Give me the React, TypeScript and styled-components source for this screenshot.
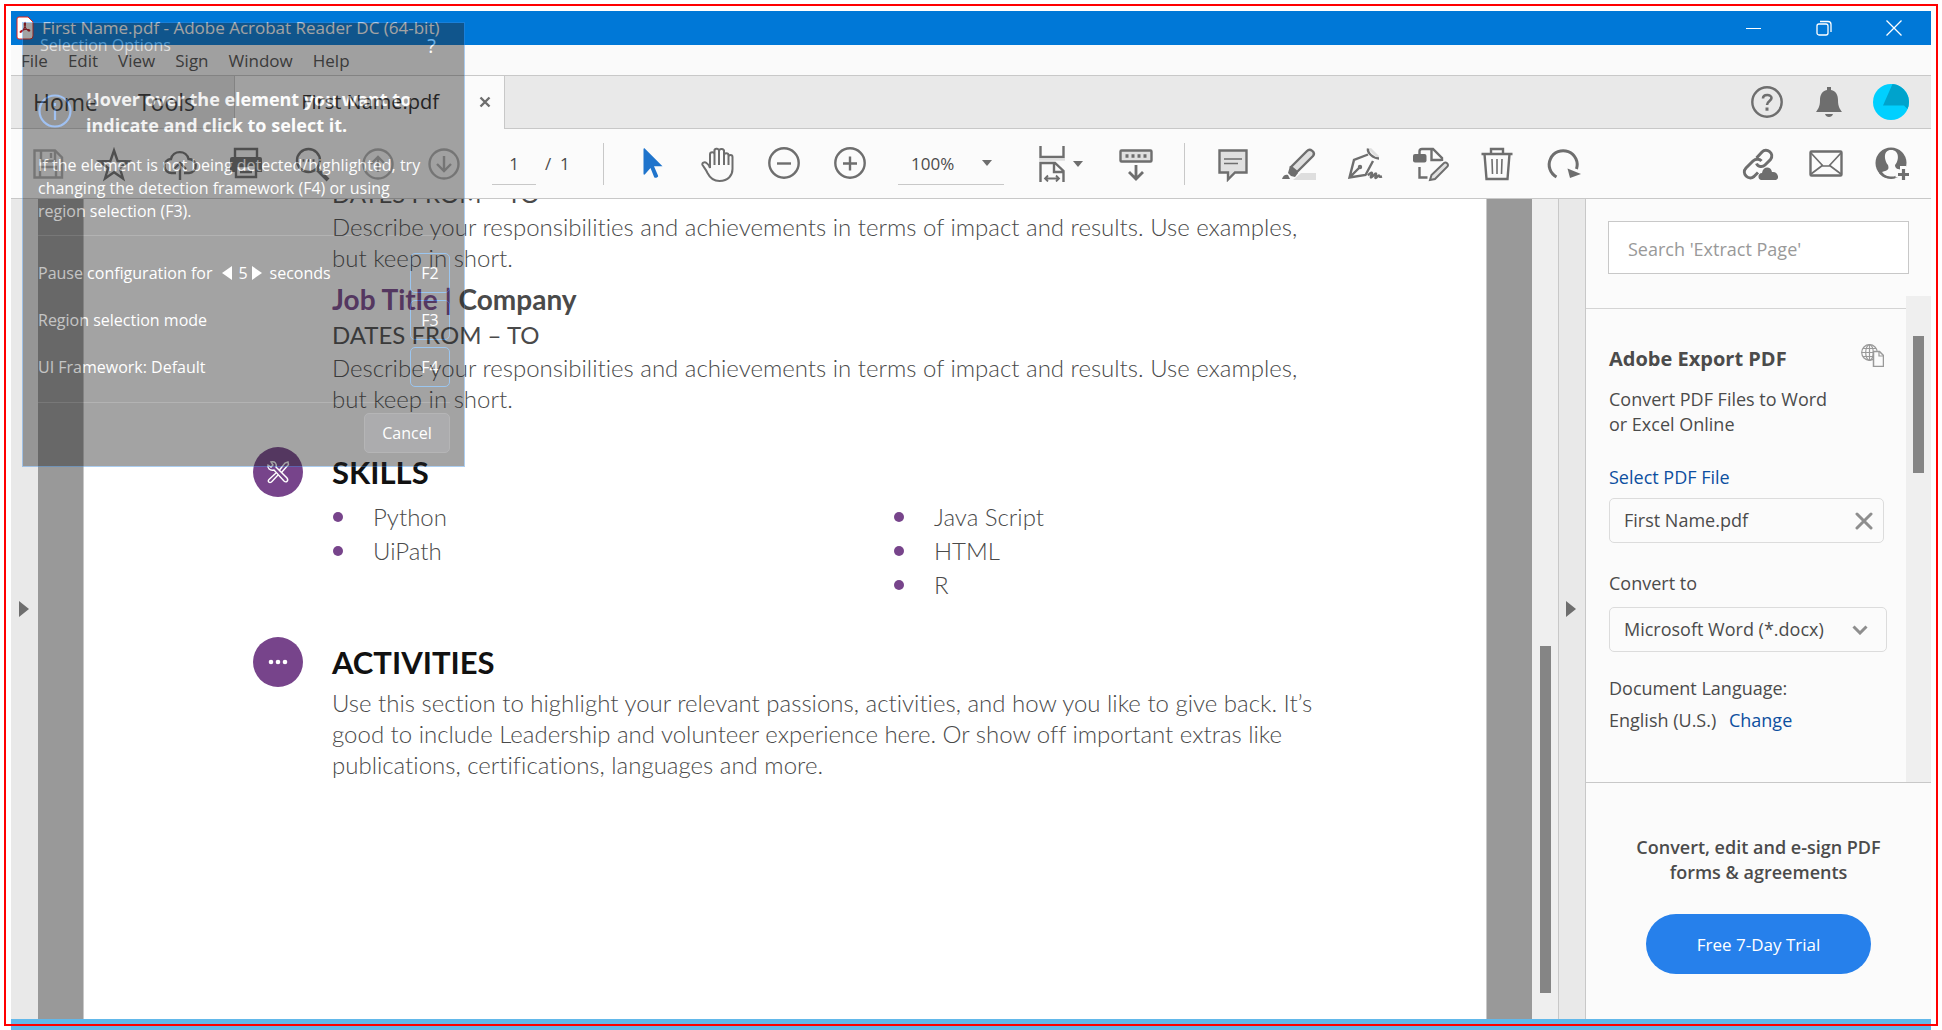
import React from "react";
import styled, { createGlobalStyle } from "styled-components";

const ui = `"Open Sans", "Noto Sans", sans-serif`;
const doc = `Lato, "Open Sans", sans-serif`;
const line = "#c8c8c8";
const ink = "#4b4b4b";
const icon = "#6e6e6e";

const Global = createGlobalStyle`
  * { box-sizing: border-box; }
  body { margin: 0; background: #fff; font-family: ${ui}; color: ${ink}; }
  button, input, select { font: inherit; color: inherit; background: none; border: 0; padding: 0; margin: 0; border-radius: 0; outline: 0; }
  h1, h2, h3, p, ul { margin: 0; padding: 0; }
  a { color: #0d4fa0; text-decoration: none; }
  svg { display: block; flex: none; }
`;

const Screen = styled.div`
  position: relative;
  height: 100vh;
  display: flex;
  flex-direction: column;
  padding: 11px 11px 0;
  overflow: hidden;
`;
const RedFrame = styled.div`
  position: absolute;
  inset: 4px;
  border: 2px solid #f00;
  pointer-events: none;
`;
const Desktop = styled.div`
  flex: none;
  height: 11px;
  background: #62b8ea;
`;
const Window = styled.div`
  flex: 1;
  min-height: 0;
  display: flex;
  flex-direction: column;
`;
const TitleBar = styled.header`
  height: 34px;
  display: flex;
  align-items: center;
  gap: 8px;
  padding: 0 2px 0 5px;
  background: #0078d7;
  color: #fff;
  h1 { flex: 1; font-size: 17px; font-weight: 400; line-height: 34px; }
`;
const WindowControls = styled.div`
  display: flex;
`;
const WindowButton = styled.button`
  width: 70px;
  height: 34px;
  display: grid;
  place-items: center;
`;
const MenuBar = styled.nav`
  height: 31px;
  display: flex;
  gap: 20px;
  padding: 2px 10px 0;
  background: #fafafa;
  border-bottom: 1px solid ${line};
  font-size: 17px;
  line-height: 28px;
`;
const TabStrip = styled.div`
  height: 53px;
  display: flex;
  background: #e9e9e9;
`;
const Tab = styled.button<{ $width: number }>`
  width: ${p => p.$width}px;
  border-bottom: 1px solid ${line};
  font-size: 23px;
  color: #333;
`;
const TabSpace = styled.div`
  width: 21px;
  border-bottom: 1px solid ${line};
`;
const OpenTab = styled.div`
  width: 271px;
  display: flex;
  align-items: center;
  justify-content: flex-end;
  gap: 40px;
  padding: 0 13px 2px 0;
  background: #fbfbfb;
  border: solid ${line};
  border-width: 0 1px;
  font-size: 20px;
  color: #222;
`;
const TabFill = styled.div`
  flex: 1;
  display: flex;
  justify-content: flex-end;
  padding-right: 9px;
  border-bottom: 1px solid ${line};
`;
const Toolbar = styled.div`
  height: 70px;
  display: flex;
  align-items: center;
  padding: 0 6px 0 4px;
  background: #fbfbfb;
  border-bottom: 1px solid ${line};
  font-size: 17px;
`;
const Tool = styled.button<{ $dim?: boolean; $width?: number }>`
  width: ${p => p.$width ?? 66}px;
  height: 52px;
  display: flex;
  align-items: center;
  justify-content: center;
  gap: 8px;
  color: ${p => (p.$dim ? "#b0b0b0" : icon)};
`;
const PageBox = styled.label`
  width: 127px;
  height: 42px;
  display: flex;
  align-items: center;
  gap: 9px;
  padding-left: 15px;
  border-right: 1px solid ${line};
  input { width: 44px; height: 42px; text-align: center; border-bottom: 1px solid ${line}; }
`;
const ToolGroup = styled.div<{ $ruled?: boolean }>`
  height: 42px;
  display: flex;
  align-items: center;
  padding: 0 15px;
  border-right: ${p => (p.$ruled ? `1px solid ${line}` : "0")};
`;
const Spring = styled.div`
  flex: 1;
`;
const ZoomBox = styled.div`
  width: 106px;
  height: 42px;
  display: grid;
  align-items: center;
  border-bottom: 1px solid ${line};
  select { grid-area: 1 / 1; height: 41px; padding-left: 13px; appearance: none; }
  svg { grid-area: 1 / 1; justify-self: end; margin-right: 12px; pointer-events: none; }
`;
const Body = styled.div`
  flex: 1;
  min-height: 0;
  display: flex;
`;
const Rail = styled.button<{ $lined?: boolean }>`
  flex: none;
  width: ${p => (p.$lined ? 28 : 27)}px;
  display: flex;
  align-items: center;
  justify-content: center;
  padding-right: 2px;
  background: #e9e9e9;
  border: solid ${line};
  border-width: 0 ${p => (p.$lined ? "1px" : "0")};
`;
const Canvas = styled.main`
  flex: 1;
  min-width: 0;
  padding: 0 45px;
  background: #999;
  overflow: hidden;
`;
const Sheet = styled.article`
  display: flow-root;
  height: 100%;
  padding: 0 100px 0 169px;
  background: #fff;
  border: solid ${line};
  border-width: 0 1px;
  font-family: ${doc};
  font-variant-ligatures: none;
  color: #4a4a4a;
`;
const Scrolled = styled.div`
  margin-top: -23px;
`;
const Entry = styled.section`
  padding-left: 79px;
  & + & { margin-top: 9px; }
`;
const JobTitle = styled.h3`
  font-size: 28px;
  line-height: 35px;
  font-weight: 700;
  span { color: #77448b; }
`;
const Dates = styled.p`
  font-size: 24px;
  line-height: 35px;
`;
const Prose = styled.p`
  font-size: 24px;
  line-height: 31px;
  font-weight: 300;
`;
const Head = styled.div<{ $gap: number }>`
  display: flex;
  align-items: center;
  gap: 29px;
  height: 50px;
  margin-top: ${p => p.$gap}px;
  h2 { font-size: 31px; font-weight: 700; color: #111; }
`;
const Badge = styled.span`
  width: 50px;
  height: 50px;
  display: grid;
  place-items: center;
  border-radius: 50%;
  background: #77448b;
`;
const Skills = styled.div`
  display: grid;
  grid-template-columns: 561px 1fr;
  padding: 3px 0 0 79px;
`;
const SkillList = styled.ul`
  list-style: none;
  font-size: 24px;
  line-height: 34px;
  font-weight: 300;
  li { display: flex; align-items: center; gap: 30px; }
  li::before { content: ""; width: 10px; height: 10px; margin-left: 1px; border-radius: 50%; background: #77448b; }
`;
const ScrollTrack = styled.div`
  flex: none;
  width: 26px;
  display: flex;
  flex-direction: column;
  align-items: center;
  padding: 447px 0 0;
  background: #efefef;
`;
const Thumb = styled.div<{ $h: number }>`
  width: 11px;
  height: ${p => p.$h}px;
  background: #858585;
`;
const Panel = styled.aside`
  flex: none;
  width: 345px;
  display: flex;
  flex-direction: column;
  background: #fbfbfb;
  font-size: 18px;
  line-height: 25px;
`;
const Search = styled.input`
  height: 53px;
  margin: 22px;
  padding: 3px 19px 0;
  background: #fff;
  border: 1px solid ${line};
  font-size: 18px;
  &::placeholder { color: #999; opacity: 1; }
`;
const PanelScroll = styled.div`
  display: flex;
  height: 486px;
`;
const PanelBody = styled.div`
  flex: 1;
  margin-top: 12px;
  padding: 37px 22px 0 23px;
  border-top: 1px solid #d4d4d4;
  h2 { font-size: 20px; line-height: 26px; }
`;
const PanelTrack = styled.div`
  width: 25px;
  padding: 40px 7px 0;
  background: #efefef;
`;
const PanelTitle = styled.div`
  display: flex;
  justify-content: space-between;
  margin-bottom: 15px;
  svg { margin-top: -2px; }
`;
const Gap = styled.div`
  margin-top: 28px;
`;
const FileBox = styled.div`
  display: flex;
  align-items: center;
  justify-content: space-between;
  height: 45px;
  margin-top: 8px;
  padding: 0 10px 0 14px;
  border: 1px solid #dcdcdc;
  border-radius: 5px;
`;
const FormatBox = styled.div`
  display: grid;
  align-items: center;
  height: 45px;
  margin: 11px -3px 20px 0;
  border: 1px solid #dcdcdc;
  border-radius: 5px;
  select { grid-area: 1 / 1; padding-left: 14px; appearance: none; height: 43px; }
  svg { grid-area: 1 / 1; justify-self: end; margin-right: 18px; pointer-events: none; }
`;
const Language = styled.p`
  line-height: 32px;
  a { margin-left: 8px; }
`;
const Promo = styled.footer`
  flex: 1;
  display: flex;
  flex-direction: column;
  align-items: center;
  padding-top: 52px;
  border-top: 1px solid ${line};
  text-align: center;
  p { font-size: 18px; font-weight: 600; }
`;
const Trial = styled.button`
  width: 225px;
  height: 60px;
  margin-top: 29px;
  border-radius: 30px;
  background: #2680eb;
  color: #fff;
  font-size: 17px;
`;
const Dialog = styled.div`
  position: absolute;
  left: 22px;
  top: 22px;
  width: 443px;
  height: 445px;
  padding: 10px 14px 0 15px;
  opacity: 0.42;
  background: #262626;
  border: 1px solid #3c8ce0;
  color: #fff;
  font-size: 16px;
`;
const DialogTop = styled.div`
  display: flex;
  justify-content: space-between;
  align-items: center;
  height: 24px;
  padding: 0 14px 0 2px;
  color: #bbb;
  button { font-size: 20px; color: #fff; }
`;
const Lead = styled.div`
  display: flex;
  gap: 14px;
  margin-top: 29px;
  h2 { font-size: 18px; line-height: 26px; font-weight: 700; white-space: nowrap; }
  svg { margin-top: 8px; }
`;
const Hint = styled.p`
  margin-top: 16px;
  padding-bottom: 12px;
  line-height: 23px;
  border-bottom: 1px solid #4c4c4c;
`;
const Options = styled.div`
  display: grid;
  gap: 7px;
  padding: 17px 0 15px;
  border-bottom: 1px solid #4c4c4c;
`;
const Option = styled.div`
  display: flex;
  align-items: center;
  justify-content: space-between;
  height: 40px;
  span { display: flex; align-items: center; gap: 4px; }
`;
const Key = styled.button`
  width: 40px;
  height: 40px;
  border: 1px solid #1478dc;
  border-radius: 5px;
`;
const Cancel = styled.button`
  display: block;
  width: 86px;
  height: 40px;
  margin: 10px 0 0 auto;
  background: #3c3c40;
  border: 1px solid #505054;
  border-radius: 5px;
`;

const Svg = ({ w = 36, h = w, sw = 2.4, children }: { w?: number; h?: number; sw?: number; children: React.ReactNode }) => (
  <svg width={w} height={h} viewBox={`0 0 ${w} ${h}`} fill="none" stroke="currentColor" strokeWidth={sw} aria-hidden="true">
    {children}
  </svg>
);
const Caret = () => (
  <svg width="10" height="6" viewBox="0 0 10 6" aria-hidden="true"><path d="M0 0h10L5 6z" fill={icon} /></svg>
);
const Arrow = () => (
  <svg width="10" height="16" viewBox="0 0 10 16" aria-hidden="true"><path d="M0 0l10 8-10 8z" fill={icon} /></svg>
);

const fileTools: { name: string; dim?: boolean; art: React.ReactNode }[] = [
  { name: "Save", dim: true, art: <><path d="M4.500 4.500H25l7 7v20H4.500z" /><path d="M11 5v10h14V5M21 7v5M10 31V21h16v10" /></> },
  { name: "Star", art: <path d="M18 4.500l3.600 10.500 11 .3-8.800 6.700 3.200 10.500L18 26.300l-9 6.200 3.200-10.500L3.400 15.300l11-.3z" /> },
  { name: "Upload", art: <><path d="M14 27H10a7 7 0 0 1-1-14 9 9 0 0 1 17.500 0A7 7 0 0 1 27 27h-5" /><path d="M18 34V18M12 23l6-6 6 6" /></> },
  { name: "Print", art: <><path d="M7 12V3h22v9" /><path d="M4 11h28a2 2 0 0 1 2 2v13h-5v-5H7v5H2V13a2 2 0 0 1 2-2z" fill="currentColor" stroke="none" /><path d="M8 20h20v11H8zM12 26h12" /></> },
  { name: "Find", art: <><circle cx="14.500" cy="14.500" r="11.500" /><path d="M23 23l11 11" strokeWidth="4" /><path d="M8.500 14.500h2M13.500 14.500h2M18.500 14.500h2" /></> },
  { name: "Previous page", dim: true, art: <><circle cx="18" cy="18" r="14.500" /><path d="M18 26V11M11 18l7-7 7 7" /></> },
  { name: "Next page", dim: true, art: <><circle cx="18" cy="18" r="14.500" /><path d="M18 10v15M11 18l7 7 7-7" /></> },
];
const viewTools = [
  { name: "Select", art: <path d="M9.500 3.300c0-1 .8-1.300 1.500-.6L28.500 20.200H20l4 9.300c.5 1-.2 1.500-1 1.900-1.200.6-2.400.6-2.900-.5L16.500 22l-5.500 6.300c-.7.600-1.500.4-1.500-.6z" fill="#1f74cc" stroke="none" /> },
  { name: "Pan", art: <path strokeWidth="2" d="M10 22V8.500a2 2 0 0 1 4.500 0V19 5.500a2 2 0 0 1 4.500-1V19 5a2 2 0 0 1 5 1v13V9.500a2 2 0 0 1 4.500 0V19 11a2 2 0 0 1 4 0v12c0 6-4 12-13 12-7 0-10-4-12-8-1.500-3.500-3-5-5-8-1-2 2-3.500 4-2 2 1.300 3 3.300 3.500 5z" /> },
  { name: "Zoom out", art: <><circle cx="18" cy="17" r="14.700" /><path d="M11 17.500h14" /></> },
  { name: "Zoom in", art: <><circle cx="18" cy="17" r="14.700" /><path d="M11 17.500h14M18 10.500v14" /></> },
];
const markTools = [
  { name: "Comment", art: <><path d="M4.500 4.500h27v22H20l-7 7v-7H4.500z" fill="#e0e0e0" /><path d="M9 13h18M9 17.500h14" strokeWidth="1.500" /></> },
  { name: "Highlight", art: <><path d="M12 34l8-7h15v7z" fill="#dedede" stroke="none" /><path d="M10 21L26 5c3-3 9 1 6 5L16 26z" fill="#e0e0e0" /><path d="M9 20l8 7-3 4-4-1-3-3zM1 33c1-4 4-5 6-4l2 4z" fill="currentColor" stroke="none" /></> },
  { name: "Sign", art: <><path d="M21 3l10 10 1-3-8-8z" fill="#e0e0e0" stroke="none" /><path d="M21 2.500c-1 4 5 10 11 10M21 8.500L7 14 2.500 31.500l16-2.500L26 15M3 31l9.500-9.500" /><circle cx="13" cy="21" r="1" /><path d="M21 29.500c1.500-2 3.500-3.500 4-2.500s-2 4-1 4.500 4-4.500 5-4-1.500 4-.5 4.500 2.500-3 3.500-2.500-.5 2 3 1" /></> },
  { name: "Edit PDF", art: <><path d="M6.500 9V5.500a2.500 2.500 0 0 1 2.500-2.500H20l9 9v3M18.500 4v10h10M6.500 21v10.500h8" /><rect x="0" y="8" width="13.500" height="8.500" rx="2" fill="currentColor" stroke="none" /><path d="M17 34l1.500-5L31 17c2-1.500 5 1 3.500 3.500L22 33z" fill="#e0e0e0" strokeWidth="2" /></> },
  { name: "Delete", art: <><path d="M2.500 8h31M12 7V3h12v4M5.500 8l2 25h21l2-25" /><path d="M13 13l.5 15M18 13v15M23 13l-.5 15" strokeWidth="1.600" /></> },
  { name: "Rotate", art: <><path d="M11.500 31A14 14 0 1 1 31.500 23" strokeWidth="3" /><path d="M22.500 22.500L36 28l-11 4z" fill="currentColor" stroke="none" /></> },
];
const shareTools = [
  { name: "Share link", art: <><path d="M14.500 12l5.500-6c4.500-4.500 13 1 8.500 7.500L23 19c-2.500 2.500-7 2-8.500-1.500" strokeWidth="3" /><path d="M19.500 15c-2-2.500-6-2.500-8.500 0l-7 7c-5 5.500 2.500 13 8 8.500l4-4" strokeWidth="3" /><path d="M19 34c-4-1-3-7 1-7 1-7 9-7 10-1 6-1 8 7 4 8z" fill="currentColor" stroke="none" /></> },
  { name: "Mail", art: <><rect x="2.500" y="5.500" width="31" height="24" rx="1" /><path d="M3 7l12 13h6L33 7M3 28l12-9M33 28l-12-9" strokeWidth="1.700" /></> },
  { name: "Add people", art: <><circle cx="17" cy="17" r="15.500" fill="currentColor" stroke="none" /><path d="M17 4c9 0 8 11 4 15 0 4 3 4 7 5l1 4c-8 5-17 4-21-2 7-2 7-3 6-7-4-5-5-15 3-15z" fill="#fbfbfb" stroke="none" /><path d="M6 26.500a14.300 14.300 0 0 0 17 4" /><path d="M29 20v15M21.500 28.500H36" stroke="#fbfbfb" strokeWidth="6" /><path d="M29.500 23v11M24 28.500h11" strokeWidth="3.200" /></> },
];

const Describe = () => (
  <Prose>
    Describe your responsibilities and achievements in terms of impact and results. Use examples,
    <br />but keep in short.
  </Prose>
);

export default function App() {
  return (
    <Screen>
      <Global />
      <Window>
        <TitleBar>
          <svg width="18" height="24" viewBox="0 0 18 24" aria-hidden="true">
            <path d="M3 1h9l5 5v14a3 3 0 0 1-3 3H3a2 2 0 0 1-2-2V3a2 2 0 0 1 2-2z" fill="#fff" stroke="#e2231a" />
            <path d="M9 6.500c1.200 1 .2 4.500-1.500 7-1.300 2-2.800 3.200-3.300 2.700-.6-.8 2-2.300 4.800-2.700 2.600-.3 5 .3 4.700 1.200-.4 1-3-.8-4.200-3C8.500 9.800 8 7 9 6.500z" fill="none" stroke="#b5121b" strokeWidth="1.200" />
          </svg>
          <h1>First Name.pdf - Adobe Acrobat Reader DC (64-bit)</h1>
          <WindowControls>
            <WindowButton aria-label="Minimize"><Svg w={16} sw={1}><path d="M0 8.500h15" /></Svg></WindowButton>
            <WindowButton aria-label="Restore"><Svg w={16} sw={1.300}><rect x="1" y="4" width="11" height="11" rx="2" /><path d="M4 1.500h8a3 3 0 0 1 3 3V12" /></Svg></WindowButton>
            <WindowButton aria-label="Close"><Svg w={16} sw={1.300}><path d="M.5.500l15 15M15.500.500l-15 15" /></Svg></WindowButton>
          </WindowControls>
        </TitleBar>
        <MenuBar>
          {["File", "Edit", "View", "Sign", "Window", "Help"].map(m => <button key={m}>{m}</button>)}
        </MenuBar>
        <TabStrip>
          <Tab $width={109}>Home</Tab>
          <Tab $width={93}>Tools</Tab>
          <TabSpace />
          <OpenTab>
            <span>First Name.pdf</span>
            <button aria-label="Close tab"><Svg w={12}><path d="M1.500 1.500l9 9M10.500 1.500l-9 9" stroke={icon} /></Svg></button>
          </OpenTab>
          <TabFill>
            <Tool aria-label="Help" $width={62}>
              <Svg>
                <circle cx="18" cy="18" r="14.700" />
                <path d="M14 14.500c0-4.500 8.500-4.500 8.500-.5 0 3-4.500 3-4.500 7" strokeWidth="2.600" /><path d="M18 23.500v3.200" strokeWidth="3" />
              </Svg>
            </Tool>
            <Tool aria-label="Notifications" $width={62}>
              <svg width="26" height="30" viewBox="0 0 26 30" aria-hidden="true"><path d="M11 0h4v3c5 1 7 5 7 10 0 7 2 9 4 12H0c2-3 4-5 4-12 0-5 2-9 7-10zM9 27h8c-1 4-7 4-8 0z" fill={icon} /></svg>
            </Tool>
            <Tool aria-label="Account" $width={62}>
              <svg width="36" height="36" viewBox="0 0 36 36" aria-hidden="true">
                <circle cx="18" cy="18" r="18" fill="#00d0ff" /><path d="M19.500 0A18 18 0 0 1 34.500 25L31 21.500H10z" fill="#00a3cc" />
              </svg>
            </Tool>
          </TabFill>
        </TabStrip>
        <Toolbar>
          {fileTools.map(t => <Tool key={t.name} aria-label={t.name} $dim={t.dim}><Svg>{t.art}</Svg></Tool>)}
          <PageBox><input aria-label="Page number" defaultValue="1" /><span>/&nbsp; 1</span></PageBox>
          <ToolGroup>
            {viewTools.map(t => <Tool key={t.name} aria-label={t.name}><Svg>{t.art}</Svg></Tool>)}
          </ToolGroup>
          <ZoomBox><select aria-label="Zoom level"><option>100%</option></select><Caret /></ZoomBox>
          <ToolGroup $ruled>
            <Tool aria-label="Fit width" $width={84}>
              <Svg w={26} h={36}>
                <path d="M1.500 0v11h23V0" /><path d="M0 13.500h26" stroke="#dedede" />
                <path d="M1.500 36V17H16l8.500 8v11M15 17v9h9" /><path d="M6 32.500h14M9 29.500l-3 3 3 3M17 29.500l3 3-3 3" strokeWidth="1.800" />
              </Svg>
              <Caret />
            </Tool>
            <Tool aria-label="Scroll mode">
              <Svg>
                <rect x="2.500" y="4.500" width="31" height="11" rx="1" fill="#e0e0e0" />
                <path d="M7.500 10H30" strokeDasharray="3 3" strokeWidth="3.500" /><path d="M18 19v14M11 26l7 7 7-7" strokeWidth="2.800" />
              </Svg>
            </Tool>
          </ToolGroup>
          <ToolGroup>
            {markTools.map(t => <Tool key={t.name} aria-label={t.name}><Svg>{t.art}</Svg></Tool>)}
          </ToolGroup>
          <Spring />
          {shareTools.map(t => <Tool key={t.name} aria-label={t.name}><Svg>{t.art}</Svg></Tool>)}
        </Toolbar>
        <Body>
          <Rail aria-label="Show navigation pane"><Arrow /></Rail>
          <Canvas>
            <Sheet>
              <Scrolled>
                <Entry><Dates>DATES FROM – TO</Dates><Describe /></Entry>
                <Entry>
                  <JobTitle><span>Job Title |</span> Company</JobTitle>
                  <Dates>DATES FROM – TO</Dates>
                  <Describe />
                </Entry>
                <Head $gap={33}>
                  <Badge>
                    <svg width="24" height="24" viewBox="0 0 24 24" fill="none" stroke="#fff" strokeWidth="1.400" aria-hidden="true">
                      <path d="M2 5l3 2 2-2-2-3c4-1 6 2 5 5l11 11c2 3-1 5-3 3L8 10C4 11 1 8 2 5z" />
                      <path d="M13.500 10L19 3l3-1 .5 2.500-7 8M10 13l-7 6.500c-2 2 .5 4 2.500 2.500L12 15" />
                    </svg>
                  </Badge>
                  <h2>SKILLS</h2>
                </Head>
                <Skills>
                  <SkillList><li>Python</li><li>UiPath</li></SkillList>
                  <SkillList><li>Java Script</li><li>HTML</li><li>R</li></SkillList>
                </Skills>
                <Head $gap={35}>
                  <Badge>
                    <svg width="20" height="6" viewBox="0 0 20 6" fill="#fff" aria-hidden="true"><circle cx="3" cy="3" r="2.300" /><circle cx="10" cy="3" r="2.300" /><circle cx="17" cy="3" r="2.300" /></svg>
                  </Badge>
                  <h2>ACTIVITIES</h2>
                </Head>
                <Entry>
                  <Prose>
                    Use this section to highlight your relevant passions, activities, and how you like to give back. It’s
                    <br />good to include Leadership and volunteer experience here. Or show off important extras like
                    <br />publications, certifications, languages and more.
                  </Prose>
                </Entry>
              </Scrolled>
            </Sheet>
          </Canvas>
          <ScrollTrack><Thumb $h={347} /></ScrollTrack>
          <Rail aria-label="Hide tools pane" $lined><Arrow /></Rail>
          <Panel>
            <Search aria-label="Search tools" placeholder="Search 'Extract Page'" />
            <PanelScroll>
              <PanelBody>
                <PanelTitle>
                  <h2>Adobe Export PDF</h2>
                  <svg width="23" height="23" viewBox="0 0 23 23" fill="none" stroke="#999" strokeWidth="1.200" aria-hidden="true">
                    <circle cx="8.500" cy="8.500" r="7.800" /><ellipse cx="8.500" cy="8.500" rx="3.800" ry="7.800" /><path d="M.5 8.500h16M8.500.5v16M2 4.500h13M2 12.500h13" />
                    <path d="M12.500 7.500h6l4 4v11h-10z" fill="#fbfbfb" strokeWidth="1.500" /><path d="M18 8v4h4" />
                  </svg>
                </PanelTitle>
                <p>Convert PDF Files to Word<br />or Excel Online</p>
                <Gap><a href="#select">Select PDF File</a></Gap>
                <FileBox>
                  First Name.pdf
                  <button aria-label="Remove file"><Svg w={18} sw={3}><path d="M2 2l14 14M16 2L2 16" stroke="#8e8e8e" strokeLinecap="round" /></Svg></button>
                </FileBox>
                <Gap><label htmlFor="format">Convert to</label></Gap>
                <FormatBox>
                  <select id="format"><option>Microsoft Word (*.docx)</option></select>
                  <Svg w={16} h={10} sw={3}><path d="M1.500 1.500L8 8l6.500-6.500" stroke="#8e8e8e" /></Svg>
                </FormatBox>
                <Language>Document Language:<br />English (U.S.) <a href="#language">Change</a></Language>
              </PanelBody>
              <PanelTrack><Thumb $h={137} /></PanelTrack>
            </PanelScroll>
            <Promo>
              <p>Convert, edit and e-sign PDF<br />forms &amp; agreements</p>
              <Trial>Free 7-Day Trial</Trial>
            </Promo>
          </Panel>
        </Body>
      </Window>
      <Desktop />
      <Dialog role="dialog" aria-label="Selection Options">
        <DialogTop><span>Selection Options</span><button aria-label="Help">?</button></DialogTop>
        <Lead>
          <Svg w={34} sw={2.200}><circle cx="17" cy="17" r="15.500" stroke="#3c8cff" /><path d="M17 15v11M17 9v3" stroke="#3c8cff" /></Svg>
          <h2>Hover over the element you want to<br />indicate and click to select it.</h2>
        </Lead>
        <Hint>If the element is not being detected/highlighted, try<br />changing the detection framework (F4) or using<br />region selection (F3).</Hint>
        <Options>
          <Option>
            <span>
              Pause configuration for
              <button aria-label="Fewer seconds"><Svg w={18} h={14}><path d="M16 0v14L6 7z" fill="#fff" stroke="none" /></Svg></button>
              5
              <button aria-label="More seconds"><Svg w={14}><path d="M0 0v14l10-7z" fill="#fff" stroke="none" /></Svg></button>
              seconds
            </span>
            <Key>F2</Key>
          </Option>
          <Option>Region selection mode<Key>F3</Key></Option>
          <Option>UI Framework: Default<Key>F4</Key></Option>
        </Options>
        <Cancel>Cancel</Cancel>
      </Dialog>
      <RedFrame />
    </Screen>
  );
}
